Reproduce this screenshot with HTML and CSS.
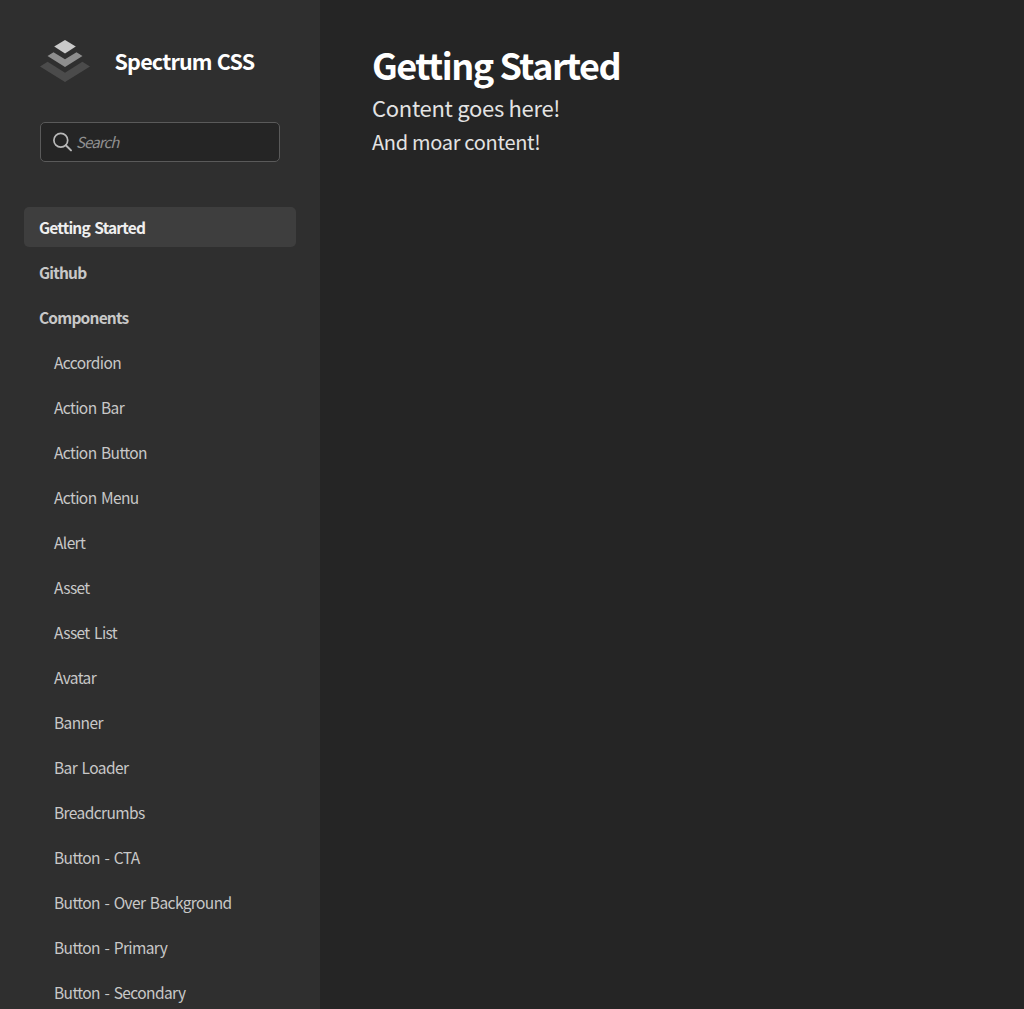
FILE: index.html
```html
<!DOCTYPE html>
<html lang="en">
<head>
<meta charset="utf-8">
<title>Spectrum CSS</title>
<link rel="stylesheet" href="styles.css">
</head>
<body>
<aside class="sidebar">
  <a class="brand">
    <svg class="logo" width="50" height="42" viewBox="0 0 50 42">
      <path fill="#4b4b4b" d="M7.6 21.8 0 26.5 25 42 50 26.5 42.4 21.8 25 32.7z"/>
      <path fill="#8e8e8e" d="M13.5 12.3 7.5 16.1 25 27 42.5 16.1 36.5 12.3 25 19.3z"/>
      <path fill="#cacaca" d="M25 0 14.2 6.6 25 13.4 35.8 6.6z"/>
    </svg>
    <span class="name">Spectrum CSS</span>
  </a>
  <label class="search">
    <svg class="lens" width="20" height="20" viewBox="0 0 20 20" fill="none" stroke="#b9b9b9">
      <circle cx="7.8" cy="8.2" r="6.9" stroke-width="1.7"/>
      <path d="M12.8 13.2 18 18.4" stroke-width="2" stroke-linecap="round"/>
    </svg>
    <span class="placeholder">Search</span>
  </label>
  <nav class="nav">
    <a class="item top selected">Getting Started</a>
    <a class="item top">Github</a>
    <a class="item top">Components</a>
    <a class="item">Accordion</a>
    <a class="item">Action Bar</a>
    <a class="item">Action Button</a>
    <a class="item">Action Menu</a>
    <a class="item">Alert</a>
    <a class="item">Asset</a>
    <a class="item">Asset List</a>
    <a class="item">Avatar</a>
    <a class="item">Banner</a>
    <a class="item">Bar Loader</a>
    <a class="item">Breadcrumbs</a>
    <a class="item">Button - CTA</a>
    <a class="item">Button - Over Background</a>
    <a class="item">Button - Primary</a>
    <a class="item">Button - Secondary</a>
  </nav>
</aside>
<main class="content">
  <h1 class="title">Getting Started</h1>
  <p class="lead">Content goes here!</p>
  <p class="more">And moar content!</p>
</main>
</body>
</html>
```
FILE: styles.css
```css
* { box-sizing: border-box; }
body {
  margin: 0;
  height: 1009px;
  display: flex;
  overflow: hidden;
  background: #252525;
  color: #e3e3e3;
  font-family: "Noto Sans CJK SC", sans-serif;
}
.sidebar {
  width: 320px;
  flex: none;
  height: 1009px;
  overflow: hidden;
  background: #2f2f2f;
}
.brand {
  display: flex;
  gap: 24.5px;
  height: 42px;
  margin: 40px 40px 0;
}
.logo { flex: none; }
.name {
  color: #fff;
  font-size: 21.5px;
  font-weight: 600;
  line-height: 42px;
  letter-spacing: -0.8px;
  word-spacing: 1px;
  white-space: nowrap;
}
.search {
  display: flex;
  align-items: center;
  width: 240px;
  height: 40px;
  margin: 40px 40px 45px;
  padding-left: 12px;
  gap: 3px;
  border: 1px solid #5a5a5a;
  border-radius: 5px;
  background: #252525;
}
.placeholder {
  color: #909090;
  font-size: 15px;
  line-height: 36px;
  font-style: italic;
  letter-spacing: -0.9px;
}
.nav {
  display: flex;
  flex-direction: column;
  gap: 5px;
  margin: 0 24px;
}
.item {
  flex: none;
  height: 40px;
  padding-left: 30px;
  border-radius: 5px;
  color: #c8c8c8;
  font-size: 15.5px;
  line-height: 41px;
  letter-spacing: -0.6px;
  word-spacing: 1.6px;
  white-space: nowrap;
}
.top { padding-left: 15px; font-weight: 600; letter-spacing: -0.8px; }
.selected { background: #3e3e3e; color: #efefef; }
.content { padding: 39px 52px; }
.title {
  margin: 0;
  color: #fff;
  font-size: 36px;
  font-weight: 700;
  line-height: 50px;
  letter-spacing: -1.5px;
}
.lead, .more { margin: 0; letter-spacing: -0.3px; }
.lead { padding-top: 1px; font-size: 22px; line-height: 35px; }
.more { font-size: 20px; line-height: 34px; }
```
